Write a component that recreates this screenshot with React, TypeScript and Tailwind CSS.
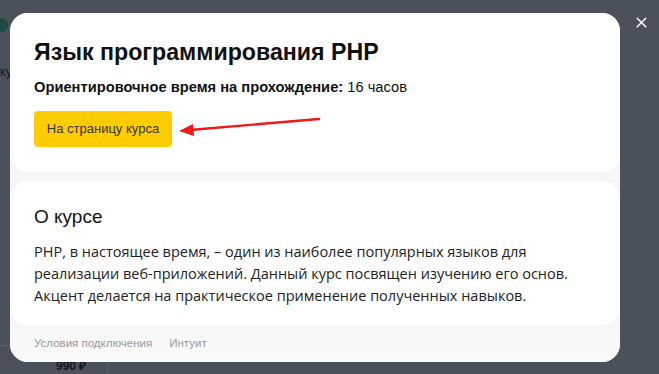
import { X } from 'lucide-react';

const font = { fontFamily: '"Liberation Sans", Arial, sans-serif' };

function Backdrop() {
  // dimmed page behind the modal
  return (
    <>
      <div className="absolute left-[-6px] top-[18px] w-[14px] h-[14px] rounded-full bg-[#1f4a43]" />
      <span className="absolute left-0 top-[62px] text-[13px] text-[#15181d]">ку</span>
      <div className="absolute left-0 top-[345px] w-[10px] h-px bg-[#5a606b]" />
      <div className="absolute left-[107px] top-[362px] w-px h-[12px] bg-[#5a606b]" />
      <span className="absolute left-[56px] top-[359px] text-[12px] leading-[14px] font-bold text-[#15181d]">990 ₽</span>
    </>
  );
}

function Arrow() {
  return (
    <svg className="absolute left-[176px] top-[115px]" width="148" height="22" viewBox="0 0 148 22">
      <line x1="143" y1="4" x2="14" y2="15" stroke="#f01818" strokeWidth="2.4" strokeLinecap="round" />
      <polygon points="3,16 17,9 18,21" fill="#f01818" />
    </svg>
  );
}

export default function App() {
  return (
    <div
      className="relative w-[659px] h-[374px] overflow-hidden bg-[#4a515d] pl-[10px] pt-[13px]"
      style={font}
    >
      <Backdrop />

      <button className="absolute left-[632px] top-[13px] w-[18px] h-[18px] flex items-center justify-center text-white">
        <X size={17} strokeWidth={2} />
      </button>

      <div className="relative w-[610px] h-[349px] rounded-[18px] bg-[#f6f6f6] flex flex-col overflow-hidden">
        <div className="bg-white rounded-b-[18px] h-[159px] px-[24px] pt-[24px] flex flex-col items-start">
          <h1 className="text-[23.2px] leading-[30px] font-bold text-[#111]">
            Язык программирования PHP
          </h1>
          <p className="mt-[10px] text-[14.7px] leading-[20px] text-[#111]">
            <span className="font-bold">Ориентировочное время на прохождение:</span> 16 часов
          </p>
          <button className="mt-[14px] w-[138px] h-[36px] rounded-[4px] bg-[#ffcc00] text-[13px] text-[#333]">
            На страницу курса
          </button>
        </div>

        <div className="mt-[9px] bg-white rounded-[18px] h-[144px] px-[24px] pt-[23px]">
          <h2 className="text-[19px] leading-[26px] text-[#111]">О курсе</h2>
          <p
            className="mt-[11px] text-[14.5px] leading-[22px] text-[#222] whitespace-nowrap"
            style={{ fontFamily: '"Open Sans", "Liberation Sans", Arial, sans-serif' }}
          >
            PHP, в настоящее время, – один из наиболее популярных языков для
            <br />
            реализации веб-приложений. Данный курс посвящен изучению его основ.
            <br />
            Акцент делается на практическое применение полученных навыков.
          </p>
        </div>

        <div className="flex-1 flex items-center gap-[17px] px-[24px] text-[11.5px] text-[#999] bg-gradient-to-b from-[#f6f6f6] to-[#fbfbfb]">
          <span>Условия подключения</span>
          <span>Интуит</span>
        </div>
      </div>

      <Arrow />
    </div>
  );
}
